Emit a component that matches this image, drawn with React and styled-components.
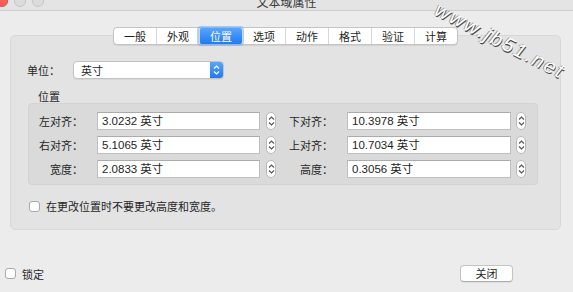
import React from "react";
import styled, { createGlobalStyle } from "styled-components";

const GlobalStyle = createGlobalStyle`
  html, body {
    margin: 0;
    padding: 0;
    background: #ececec;
  }
  body {
    font-family: "Noto Sans CJK SC", "Liberation Sans", sans-serif;
    font-size: 11px;
    color: #262626;
  }
`;

const Window = styled.div`
  position: relative;
  width: 573px;
  height: 292px;
  overflow: hidden;
  display: flex;
  flex-direction: column;
  background: #ececec;
`;

const TitleBar = styled.div`
  height: 10px;
  flex-shrink: 0;
  display: grid;
  grid-template-columns: 1fr auto 1fr;
  align-items: start;
  background: #e4e4e4;
  border-bottom: 1px solid #cdcdcd;
  overflow: hidden;
`;

const Lights = styled.div`
  display: flex;
  gap: 6px;
  margin: -5px 0 0 -4px;
`;

const Light = styled.span`
  width: 10px;
  height: 10px;
  border-radius: 50%;
  background: ${(p) => (p.red ? "#fc5f57" : "#dcdcdc")};
  border: 1px solid ${(p) => (p.red ? "#df4a43" : "#c6c6c6")};
`;

const Title = styled.div`
  font-size: 12px;
  line-height: 12px;
  margin-top: -4px;
  color: #3a3a3a;
`;

const Body = styled.div`
  padding: 16px 12px 0 10px;
  display: flex;
  flex-direction: column;
`;

const TabsRow = styled.div`
  display: flex;
  justify-content: center;
  margin-bottom: -10px;
  position: relative;
  z-index: 1;
`;

const Tabs = styled.div`
  display: flex;
  background: #fff;
  border: 1px solid #c4c4c4;
  border-radius: 4px;
  box-shadow: 0 1px 1px rgba(0, 0, 0, 0.08);
`;

const Tab = styled.div`
  width: 42px;
  height: 16px;
  line-height: 16px;
  text-align: center;
  font-size: 11px;
  color: ${(p) => (p.active ? "#fff" : "#1f1f1f")};
  border-left: ${(p) => (p.first ? "none" : "1px solid #d6d6d6")};
  background: ${(p) =>
    p.active ? "linear-gradient(#5aa5fb, #1f7af4)" : "transparent"};
  box-shadow: ${(p) =>
    p.active ? "0 0 0 2px rgba(110, 170, 250, 0.55)" : "none"};
  border-radius: ${(p) => (p.active ? "2px" : "0")};
  position: relative;
`;

const Box = styled.div`
  background: #e3e3e3;
  border: 1px solid #d8d8d8;
  border-radius: 5px;
  padding: 25px 22px 17px 17px;
  display: flex;
  flex-direction: column;
`;

const UnitRow = styled.div`
  display: flex;
  align-items: center;
  height: 18px;
  margin-left: -1px;
`;

const UnitLabel = styled.div`
  width: 46px;
`;

const Select = styled.div`
  width: 151px;
  height: 18px;
  box-sizing: border-box;
  display: flex;
  background: #fff;
  border: 1px solid #c2c2c2;
  border-radius: 4px;
  overflow: hidden;
  box-shadow: 0 1px 1px rgba(0, 0, 0, 0.06);
`;

const SelectText = styled.div`
  flex: 1;
  padding-left: 7px;
  line-height: 16px;
`;

const SelectArrows = styled.div`
  width: 13px;
  background: linear-gradient(#5aa5fb, #1f7af4);
  display: flex;
  align-items: center;
  justify-content: center;
`;

const SectionLabel = styled.div`
  margin-top: 10px;
  line-height: 14px;
  padding-left: 10px;
`;

const Inner = styled.div`
  background: #dadada;
  border: 1px solid #d3d3d3;
  border-radius: 4px;
  padding: 8px 0 6px 0;
  display: grid;
  grid-template-columns: 68px 163px 16px 71px 164px 16px;
  grid-auto-rows: 18px;
  row-gap: 6px;
`;

const FieldLabel = styled.div`
  text-align: right;
  padding-right: 14px;
  line-height: 18px;
  white-space: nowrap;
`;

const Input = styled.div`
  height: 18px;
  box-sizing: border-box;
  background: #fff;
  border: 1px solid #bfbfbf;
  border-top-color: #ababab;
  padding-left: 4px;
  line-height: 16px;
  font-family: "Liberation Sans", "Noto Sans CJK SC", sans-serif;
  font-size: 11.5px;
  color: #1e1e1e;
`;

const Stepper = styled.div`
  margin-left: ${(p) => p.offset}px;
  width: 10px;
  height: 18px;
  box-sizing: border-box;
  background: #fff;
  border: 1px solid #b9b9b9;
  border-radius: 5px;
  display: flex;
  align-items: center;
  justify-content: center;
`;

const CheckRow = styled.label`
  display: flex;
  align-items: center;
  gap: 6px;
  height: 12px;
  margin-top: ${(p) => p.top || 0}px;
  margin-left: ${(p) => p.left || 0}px;
`;

const Check = styled.span`
  width: 11px;
  height: 11px;
  box-sizing: border-box;
  background: #fff;
  border: 1px solid #a9a9a9;
  border-radius: 3px;
`;

const Footer = styled.div`
  margin-top: auto;
  display: flex;
  align-items: center;
  justify-content: space-between;
  padding: 0 60px 10px 5px;
`;

const Button = styled.div`
  width: 53px;
  height: 17px;
  box-sizing: border-box;
  background: #fff;
  border: 1px solid #c4c4c4;
  border-bottom-color: #acacac;
  border-radius: 4px;
  text-align: center;
  line-height: 15px;
  box-shadow: 0 1px 1px rgba(0, 0, 0, 0.06);
`;

const Watermark = styled.div`
  position: absolute;
  left: 441px;
  top: -1px;
  transform: rotate(27deg);
  transform-origin: 0 0;
  font-family: "Liberation Sans", sans-serif;
  font-style: italic;
  font-size: 20px;
  line-height: 20px;
  letter-spacing: 2px;
  color: #fff;
  text-shadow: 1px 1px 0 #4a4a4a, -1px 0 0 #9a9a9a;
  white-space: nowrap;
  pointer-events: none;
`;

const Chevrons = ({ color }) => (
  <svg width="7" height="12" viewBox="0 0 7 12">
    <path
      d="M1 4.5 L3.5 2 L6 4.5 M1 7.5 L3.5 10 L6 7.5"
      fill="none"
      stroke={color}
      strokeWidth="1.1"
    />
  </svg>
);

const tabs = ["一般", "外观", "位置", "选项", "动作", "格式", "验证", "计算"];

const rows = [
  ["左对齐：", "3.0232 英寸", "下对齐：", "10.3978 英寸"],
  ["右对齐：", "5.1065 英寸", "上对齐：", "10.7034 英寸"],
  ["宽度：", "2.0833 英寸", "高度：", "0.3056 英寸"],
];

export default function App() {
  return (
    <>
      <GlobalStyle />
      <Window>
        <TitleBar>
          <Lights>
            <Light red />
            <Light />
            <Light />
          </Lights>
          <Title>文本域属性</Title>
          <div />
        </TitleBar>

        <Body>
          <TabsRow>
            <Tabs>
              {tabs.map((t, i) => (
                <Tab key={t} first={i === 0} active={t === "位置"}>
                  {t}
                </Tab>
              ))}
            </Tabs>
          </TabsRow>

          <Box>
            <UnitRow>
              <UnitLabel>单位：</UnitLabel>
              <Select>
                <SelectText>英寸</SelectText>
                <SelectArrows>
                  <Chevrons color="#fff" />
                </SelectArrows>
              </Select>
            </UnitRow>

            <SectionLabel>位置</SectionLabel>
            <Inner>
              {rows.map(([l1, v1, l2, v2]) => (
                <React.Fragment key={l1}>
                  <FieldLabel>{l1}</FieldLabel>
                  <Input>{v1}</Input>
                  <Stepper offset={6}>
                    <Chevrons color="#555" />
                  </Stepper>
                  <FieldLabel>{l2}</FieldLabel>
                  <Input>{v2}</Input>
                  <Stepper offset={5}>
                    <Chevrons color="#555" />
                  </Stepper>
                </React.Fragment>
              ))}
            </Inner>

            <CheckRow top={15} left={1}>
              <Check />
              在更改位置时不要更改高度和宽度。
            </CheckRow>
          </Box>
        </Body>

        <Footer>
          <CheckRow>
            <Check />
            锁定
          </CheckRow>
          <Button>关闭</Button>
        </Footer>

        <Watermark>www.jb51.net</Watermark>
      </Window>
    </>
  );
}
